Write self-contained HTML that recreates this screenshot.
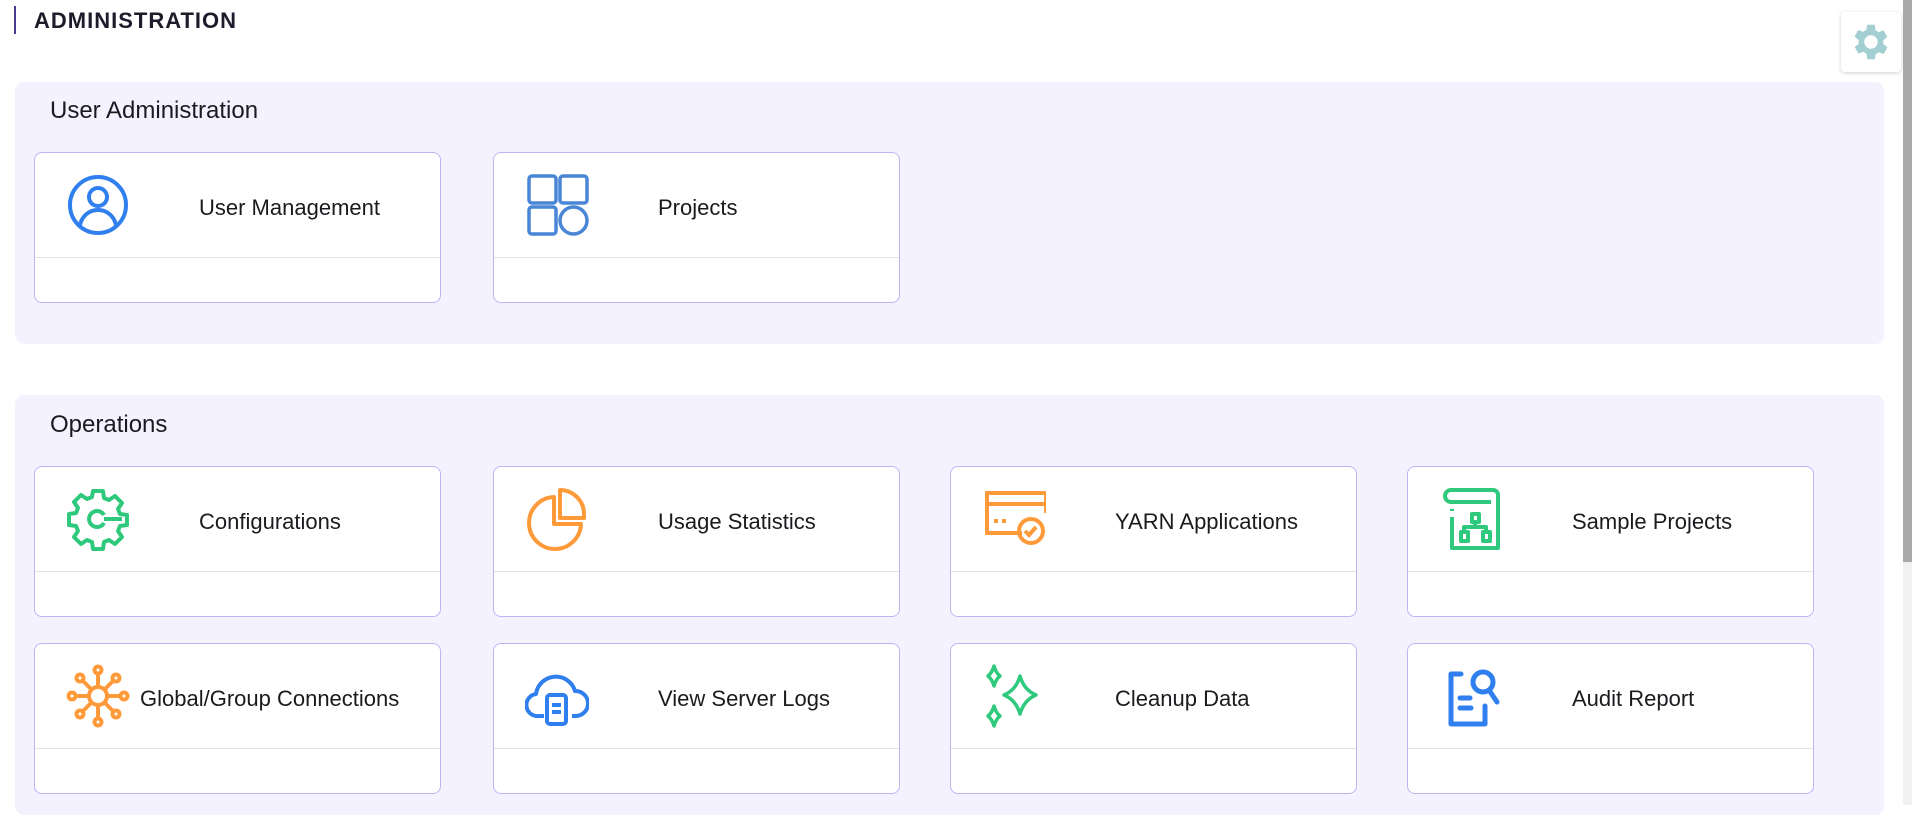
<!DOCTYPE html>
<html><head><meta charset="utf-8"><style>
*{box-sizing:border-box;margin:0;padding:0}
body{width:1912px;height:805px;overflow:hidden;background:#fff;font-family:"Liberation Sans",Arial,sans-serif;position:relative;color:#1b1b1f}
.title{position:absolute;left:14px;top:6px;height:28px;border-left:2px solid #4b3a8c;padding-left:18px;font-size:22px;font-weight:bold;line-height:30px;color:#1c1c2a;letter-spacing:1px}
.gbtn{position:absolute;left:1841px;top:12px;width:60px;height:60px;background:#fff;border-radius:4px;box-shadow:0 1px 4px rgba(0,0,0,.18);display:flex;align-items:center;justify-content:center}
.sb{position:absolute;left:1903px;top:0;width:9px;height:805px;background:#f1f1f1}
.sb div{width:9px;height:562px;background:#a8a8a8}
.sec{position:absolute;left:15px;width:1869px;background:#f4f2fe;border-radius:9px}
.sec h2{position:absolute;left:35px;font-size:24px;font-weight:normal;color:#1b1b1f}
.card{position:absolute;width:407px;height:151px;background:#fff;border:1px solid #c7b1f5;border-radius:8px}
.card .line{position:absolute;left:0;right:0;top:104px;border-top:1px solid #e3e3e6}
.card svg{position:absolute;left:31px;top:20px}
.card span{position:absolute;left:164px;top:42px;font-size:22px;line-height:26px;white-space:nowrap}
</style></head><body>
<div class="title">ADMINISTRATION</div>
<div class="gbtn"><svg width="46" height="46" viewBox="0 0 24 24"><path fill="#a3cfd3" d="M19.4 13a7.5 7.5 0 0 0 0-2l2.1-1.6-2-3.5-2.5 1a7.6 7.6 0 0 0-1.7-1L15 3h-4l-.4 2.7a7.6 7.6 0 0 0-1.7 1l-2.5-1-2 3.5L6.6 11a7.5 7.5 0 0 0 0 2l-2.1 1.6 2 3.5 2.5-1a7.6 7.6 0 0 0 1.7 1L11 21h4l.4-2.7a7.6 7.6 0 0 0 1.7-1l2.5 1 2-3.5zM13 15.5a3.5 3.5 0 1 1 0-7 3.5 3.5 0 0 1 0 7z" transform="translate(-1 0)"/></svg></div>
<div class="sb"><div></div></div>

<div class="sec" style="top:82px;height:262px"><h2 style="top:15px">User Administration</h2></div>
<div class="card" style="left:34px;top:152px"><svg width="64" height="64" viewBox="0 0 64 64" fill="none" stroke="#2f7fee" stroke-width="4"><circle cx="32" cy="32" r="28"/><circle cx="32" cy="24" r="9"/><path d="M14 52c2-9 9-15 18-15s16 6 18 15"/></svg><span>User Management</span><div class="line"></div></div>
<div class="card" style="left:493px;top:152px"><svg width="64" height="64" viewBox="0 0 64 64" fill="none" stroke="#4a86d6" stroke-width="3.5"><rect x="4" y="3" width="27" height="27" rx="3"/><rect x="35" y="3" width="27" height="27" rx="3"/><rect x="4" y="34" width="27" height="27" rx="3"/><circle cx="48.5" cy="47.5" r="13.5"/></svg><span>Projects</span><div class="line"></div></div>

<div class="sec" style="top:395px;height:420px"><h2 style="top:16px">Operations</h2></div>
<div class="card" style="left:34px;top:466px"><svg width="64" height="64" viewBox="0 0 64 64" fill="none" stroke="#2ec97c" stroke-width="4" stroke-linejoin="round"><path d="M27 4h10l1 7 5 2 6-4 7 7-4 6 2 5 7 1v10l-7 1-2 5 4 6-7 7-6-4-5 2-1 7H27l-1-7-5-2-6 4-7-7 4-6-2-5-7-1V27l7-1 2-5-4-6 7-7 6 4 5-2z"/><path d="M38 28a8 8 0 1 0 0 8M38 32h18"/></svg><span>Configurations</span><div class="line"></div></div>
<div class="card" style="left:493px;top:466px"><svg width="64" height="64" viewBox="0 0 64 64" fill="none" stroke="#ff9a3a" stroke-width="4" stroke-linejoin="round"><path d="M29 10A26 26 0 1 0 56 37H29z"/><path d="M35 3a24 24 0 0 1 24 24v4H35z"/></svg><span>Usage Statistics</span><div class="line"></div></div>
<div class="card" style="left:950px;top:466px"><svg width="64" height="64" viewBox="0 0 64 64" fill="none" stroke="#ff9a3a" stroke-width="4"><path d="M40 46H5V6h59v20M5 17h59"/><path d="M12 34h4M20 34h4" stroke-width="4"/><circle cx="49" cy="44" r="12"/><path d="M43 44l4 4 7-8"/></svg><span>YARN Applications</span><div class="line"></div></div>
<div class="card" style="left:1407px;top:466px"><svg width="64" height="64" viewBox="0 0 64 64" fill="none" stroke="#2ec97c" stroke-width="4" stroke-linejoin="round"><path d="M12 15H52M12 15a6 6 0 0 1 0-12h42a5 5 0 0 1 5 5v53H13V30M13 22v2"/><rect x="33" y="27" width="7" height="8"/><rect x="22" y="45" width="7" height="9"/><rect x="44" y="45" width="7" height="9"/><path d="M36 35v5M25 45v-5h22v5"/></svg><span>Sample Projects</span><div class="line"></div></div>
<div class="card" style="left:34px;top:643px"><svg width="64" height="64" viewBox="0 0 64 64" fill="none" stroke="#ff9a3a" stroke-width="4"><circle cx="32" cy="32" r="9"/><path d="M32 23V9M32 41v14M23 32H9M41 32h14M26 26l-9-9M38 26l9-9M26 38l-9 9M38 38l9 9"/><circle cx="32" cy="6" r="3.5"/><circle cx="32" cy="58" r="3.5"/><circle cx="6" cy="32" r="3.5"/><circle cx="58" cy="32" r="3.5"/><circle cx="14" cy="14" r="3.5"/><circle cx="50" cy="14" r="3.5"/><circle cx="14" cy="50" r="3.5"/><circle cx="50" cy="50" r="3.5"/></svg><span style="left:105px">Global/Group Connections</span><div class="line"></div></div>
<div class="card" style="left:493px;top:643px"><svg width="64" height="64" viewBox="0 0 64 64" fill="none" stroke="#2f7fee" stroke-width="4" stroke-linejoin="round"><path d="M19 52h-5A11 11 0 0 1 11 30 20 20 0 0 1 50 27a12 12 0 0 1 1 25h-4"/><rect x="22" y="31" width="19" height="29" rx="3"/><path d="M27 41h9M27 48h9"/></svg><span>View Server Logs</span><div class="line"></div></div>
<div class="card" style="left:950px;top:643px"><svg width="64" height="64" viewBox="0 0 64 64" fill="none" stroke="#2ec97c" stroke-width="3.5" stroke-linejoin="round"><path d="M12 2Q14 9 18 12Q14 15 12 22Q10 15 6 12Q10 9 12 2z"/><path d="M12 42Q14 49 18 52Q14 55 12 62Q10 55 6 52Q10 49 12 42z"/><path d="M38 12Q42 26 54 31Q42 36 38 50Q34 36 22 31Q34 26 38 12z"/></svg><span>Cleanup Data</span><div class="line"></div></div>
<div class="card" style="left:1407px;top:643px"><svg width="64" height="64" viewBox="0 0 64 64" fill="none" stroke="#2f7fee" stroke-width="5" stroke-linecap="round" stroke-linejoin="round"><path d="M22 10H12v50h34V42"/><path d="M21 34h10M21 44h11"/><circle cx="44" cy="18" r="10"/><path d="M50 26l8 12"/></svg><span>Audit Report</span><div class="line"></div></div>
</body></html>
